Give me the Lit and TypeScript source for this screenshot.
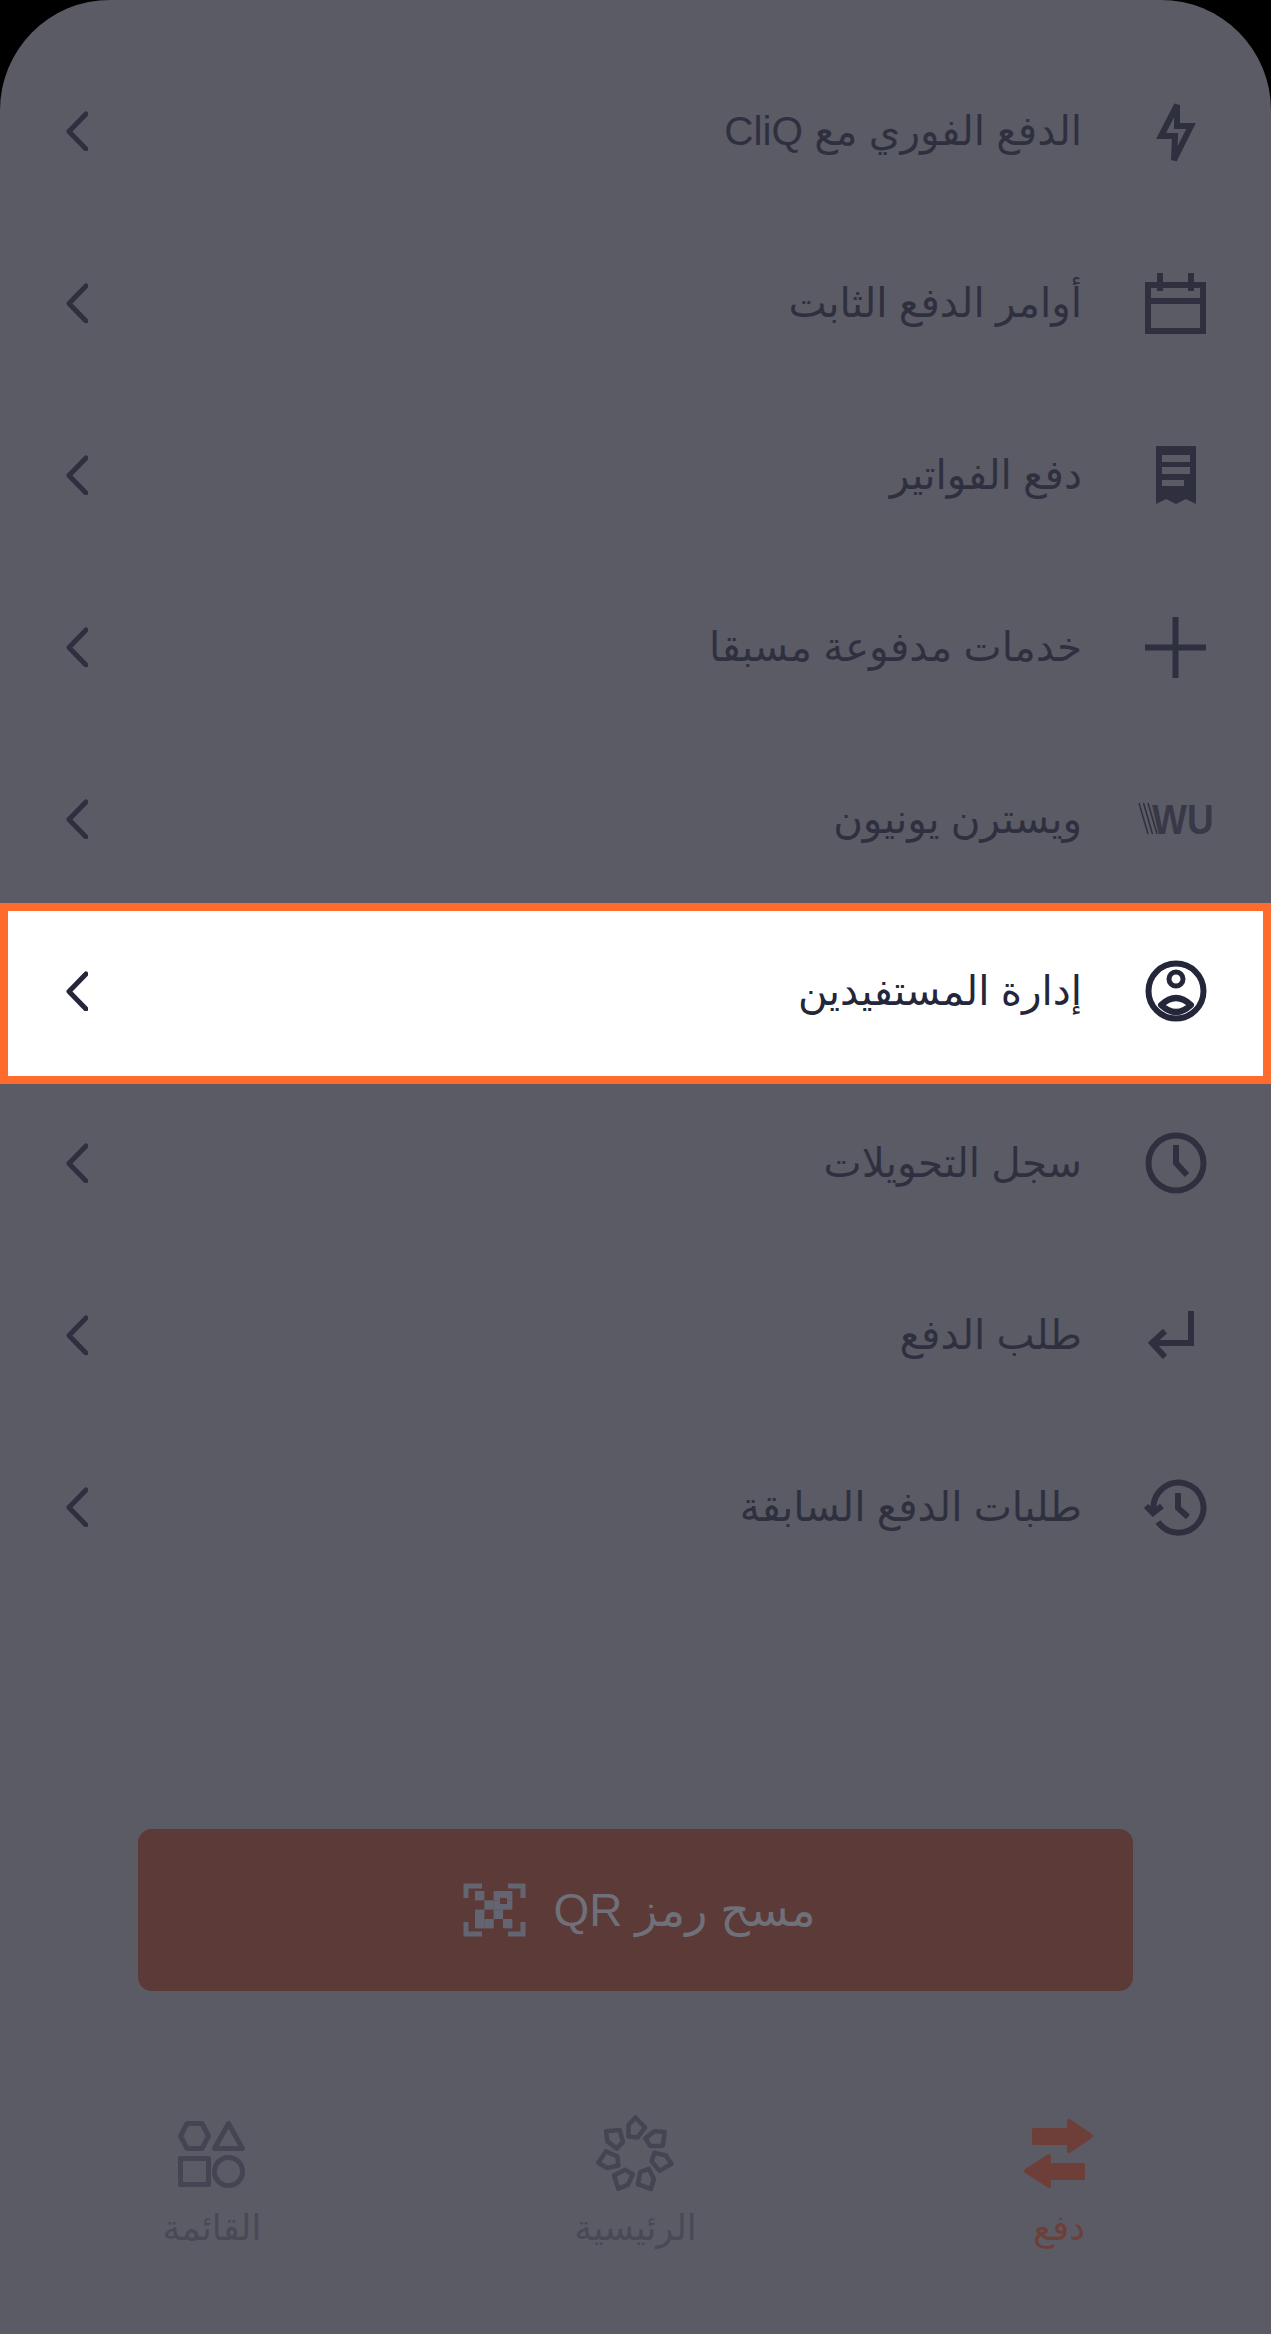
import { LitElement, html, css, svg } from 'lit'
import { customElement } from 'lit/decorators.js'

const icons: Record<string, unknown> = {
  bolt: svg`<path class="s" d="M41 14 25 45h14l-1 24 17-34H41z" />`,
  calendar: svg`<path class="s" d="M12 22h55v46H12zM12 38h55M24 10v18M55 10v18" />`,
  receipt: svg`<path class="f" fill-rule="evenodd" d="M20 11h40v58l-10-5-10 5-10-5-10 5zM26 20v7h28v-7zM26 32v7h28v-7zM26 45v6h22v-6z" />`,
  plus: svg`<path class="s" d="M9 40.5h61M39.5 10v61" />`,
  wu: svg`<path class="thin" d="M3 24l9 31M7.500 24l9 31M12 24l9 31" /><text class="wu" transform="translate(16 55) scale(1 1.160)">WU</text>`,
  person: svg`<circle class="s" cx="40" cy="40" r="27.500" /><circle class="m" cx="40" cy="28" r="7" /><path class="s" stroke-linejoin="round" d="M25 54Q40 40 55 54 40 68 25 54z" />`,
  clock: svg`<circle class="s" cx="40" cy="40" r="27.500" /><path class="s" d="M40 22v18l11 12" />`,
  ret: svg`<path class="s" d="M55 16v32H17M29 36 16 48l13 14" />`,
  history: svg`<path class="s" d="M22 55A25 25 0 1 0 17.500 42" /><path class="s" d="M10 39l7 7 9-7M42 26v15l10 9" />`,
}

const rows = [
  { label: 'الدفع الفوري مع CliQ', icon: 'bolt' },
  { label: 'أوامر الدفع الثابت', icon: 'calendar' },
  { label: 'دفع الفواتير', icon: 'receipt' },
  { label: 'خدمات مدفوعة مسبقا', icon: 'plus' },
  { label: 'ويسترن يونيون', icon: 'wu' },
  { label: 'إدارة المستفيدين', icon: 'person', active: true },
  { label: 'سجل التحويلات', icon: 'clock' },
  { label: 'طلب الدفع', icon: 'ret' },
  { label: 'طلبات الدفع السابقة', icon: 'history' },
]

const qrCells = [
  [0, 0], [2, 0], [3, 0],
  [1, 1], [2, 1], [3, 1],
  [0, 2], [2, 2],
  [0, 3], [1, 3], [3, 3],
]

@customElement('app-root')
export class AppRoot extends LitElement {
  static styles = css`
    :host { display: block; background: #000; font-family: "Liberation Sans", "DejaVu Sans", sans-serif; }
    .panel {
      height: 2334px;
      box-sizing: border-box;
      background: #5b5b66;
      border-radius: 110px 110px 0 0;
      padding-top: 45px;
      overflow: hidden;
    }
    .row {
      display: flex;
      align-items: center;
      height: 172px;
      box-sizing: border-box;
      margin: 0 55px 0 64px;
      border-bottom: 1px solid #5a5a64;
      color: #2f303f;
    }
    .row.active {
      position: relative;
      height: 181px;
      margin: -2px 0 -7px;
      padding: 0 47px 5px 56px;
      border: 8px solid #ff6b2c;
      background: #fff;
      color: #24263a;
    }
    .row .ic { width: 80px; height: 80px; flex: none; direction: ltr; }
    .row .label { font-size: 40.500px; margin-right: 54px; white-space: nowrap; }
    .row .chev { width: 24px; height: 40px; flex: none; margin-right: auto; }
    svg { display: block; }
    .s, .m, .thin { fill: none; stroke: currentColor; }
    .s { stroke-width: 6; }
    .m { stroke-width: 5; }
    .thin { stroke-width: 1.500; }
    .f { fill: currentColor; }
    .wu { font: bold 37px "Liberation Sans", sans-serif; fill: #383947; }
    .chev path { fill: none; stroke: currentColor; stroke-width: 5; stroke-linecap: round; stroke-linejoin: round; }
    .scan {
      display: flex;
      align-items: center;
      justify-content: center;
      gap: 26px;
      height: 162px;
      margin: 236px 138px 0;
      padding-left: 8px;
      border-radius: 14px;
      background: #5c3a37;
      color: #6f7079;
      font-size: 46px;
    }
    .scan svg { width: 64px; height: 58px; flex: none; color: #636672; }
    .scan .hole { fill: #5c3a37; }
    .scan .corner { fill: none; stroke: currentColor; stroke-width: 5; }
    .scan .cell { fill: currentColor; }
    .nav { display: grid; grid-template-columns: repeat(3, 1fr); margin-top: 123px; }
    .tab { display: flex; flex-direction: column; align-items: center; color: #444552; font-size: 35.500px; }
    .tab svg { width: 90px; height: 80px; }
    .tab .lbl { margin-top: 13px; color: #484955; }
    .tab.on, .tab.on .lbl { color: #6e3f38; }
    .o { fill: none; stroke: currentColor; stroke-width: 5; stroke-linejoin: round; }
    .p { fill: none; stroke: currentColor; stroke-width: 4.500; stroke-linejoin: round; }
    .a { fill: currentColor; stroke: currentColor; stroke-width: 4; stroke-linejoin: round; }
  `

  private _row(r: { label: string; icon: string; active?: boolean }) {
    return html`
      <div class="row ${r.active ? 'active' : ''}" dir="rtl">
        <svg class="ic" viewBox="0 0 80 80">${icons[r.icon]}</svg>
        <span class="label">${r.label}</span>
        <svg class="chev" viewBox="0 0 24 40"><path d="M22 3 5 20.500 22 38" /></svg>
      </div>
    `
  }

  private _petals() {
    return [0, 1, 2, 3, 4, 5, 6].map(i => svg`
      <path class="p" transform="rotate(${(i * 360) / 7} 45 41)" d="M45.500 3.500l9.500 10-7.500 10-9-1v-11.500z" />
    `)
  }

  render() {
    return html`
      <div class="panel">
        ${rows.map(r => this._row(r))}
        <div class="scan" dir="rtl">
          <span>مسح رمز QR</span>
          <svg viewBox="0 0 64 58">
            <path class="corner" d="M3 17V5H19M45 5H60V17M3 41V53H19M45 53H60V41" />
            ${qrCells.map(([c, r]) => svg`<rect class="cell" x=${12 + c * 9.330} y=${10 + r * 9.330} width="9.400" height="9.400" />`)}
            <rect class="hole" x="37" y="17" width="7" height="6" />
          </svg>
        </div>
        <div class="nav">
          <div class="tab">
            <svg viewBox="0 0 90 80">
              <path class="o" d="M20 9.500h15l6.500 12.500-6.500 12.500H20L13.500 22zM61.500 9.500l14 25h-28z" />
              <rect class="o" x="13.500" y="44.500" width="28" height="26" />
              <circle class="o" cx="61.500" cy="57.500" r="14" />
            </svg>
            <span class="lbl">القائمة</span>
          </div>
          <div class="tab">
            <svg viewBox="0 0 90 80">${this._petals()}</svg>
            <span class="lbl">الرئيسية</span>
          </div>
          <div class="tab on">
            <svg viewBox="0 0 90 80">
              <path class="a" d="M20 16h35V7l22 15-22 15v-8H20z" />
              <path class="a" d="M69 51H35v-9L12 57l23 15v-8h34z" />
            </svg>
            <span class="lbl">دفع</span>
          </div>
        </div>
      </div>
    `
  }
}
